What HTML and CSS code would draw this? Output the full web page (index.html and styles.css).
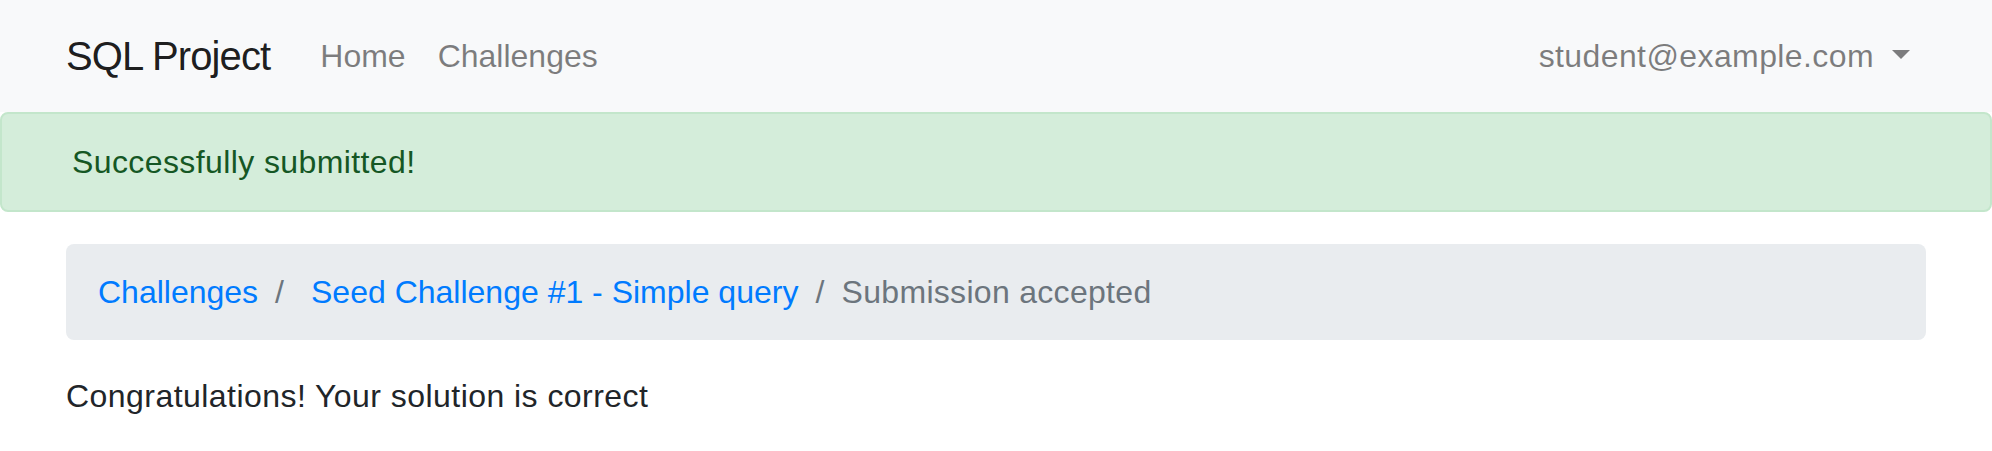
FILE: index.html
```html
<!DOCTYPE html>
<html lang="en">
<head>
<meta charset="utf-8">
<title>SQL Project</title>
<link rel="stylesheet" href="styles.css">
</head>
<body>
<nav class="navbar">
  <div class="container nav-inner">
    <a class="brand" href="#">SQL Project</a>
    <ul class="nav">
      <li><a class="nav-link" href="#">Home</a></li>
      <li><a class="nav-link" href="#">Challenges</a></li>
    </ul>
    <ul class="nav nav-right">
      <li><a class="nav-link dropdown-toggle" href="#">student@example.com</a></li>
    </ul>
  </div>
</nav>
<div class="alert">
  <div class="alert-inner">Successfully submitted!</div>
</div>
<main class="container">
  <ol class="breadcrumb">
    <li class="crumb"><a href="#">Challenges</a></li>
    <li class="crumb sep sep-space"><a href="#">Seed Challenge #1 - Simple query</a></li>
    <li class="crumb sep active">Submission accepted</li>
  </ol>
  <p class="message">Congratulations! Your solution is correct</p>
</main>
</body>
</html>
```
FILE: styles.css
```css
* { box-sizing: border-box; }

body {
  margin: 0;
  font-family: "Liberation Sans", Arial, sans-serif;
  font-size: 32px;
  line-height: 48px;
  color: #212529;
  background: #fff;
}

a { text-decoration: none; }

.container {
  width: 1860px;
  margin: 0 auto;
}

.navbar {
  background: #f8f9fa;
  padding: 16px 0;
}

.nav-inner {
  display: flex;
  align-items: center;
}

.brand {
  font-size: 40px;
  line-height: 60px;
  padding: 10px 0;
  margin-right: 34px;
  color: rgba(0, 0, 0, 0.9);
  letter-spacing: -0.9px;
}

.nav {
  display: flex;
  list-style: none;
  margin: 0;
  padding: 0;
}

.nav-right { margin-left: auto; }

.nav-link {
  display: block;
  padding: 16px;
  color: rgba(0, 0, 0, 0.5);
}

.dropdown-toggle { letter-spacing: 0.4px; }

.dropdown-toggle::after {
  content: "";
  display: inline-block;
  margin-left: 18px;
  vertical-align: 8px;
  border-top: 9.6px solid;
  border-left: 9.6px solid transparent;
  border-right: 9.6px solid transparent;
  border-bottom: 0;
}

.alert {
  margin-bottom: 32px;
  padding: 24px 40px;
  background: #d4edda;
  border: 2px solid #c3e6cb;
  border-radius: 8px;
  color: #155724;
}

.alert-inner {
  padding: 0 30px;
  letter-spacing: 0.4px;
}

.breadcrumb {
  display: flex;
  list-style: none;
  margin: 0 0 32px;
  padding: 24px 32px;
  background: #e9ecef;
  border-radius: 8px;
}

.breadcrumb a { color: #007bff; }

.sep { padding-left: 17px; }

.sep::before {
  content: "/";
  display: inline-block;
  padding-right: 17px;
  color: #6c757d;
}

.sep-space a { margin-left: 10px; }

.active {
  color: #6c757d;
  letter-spacing: 0.3px;
}

.message {
  margin: 0 0 32px;
  letter-spacing: 0.45px;
}
```
